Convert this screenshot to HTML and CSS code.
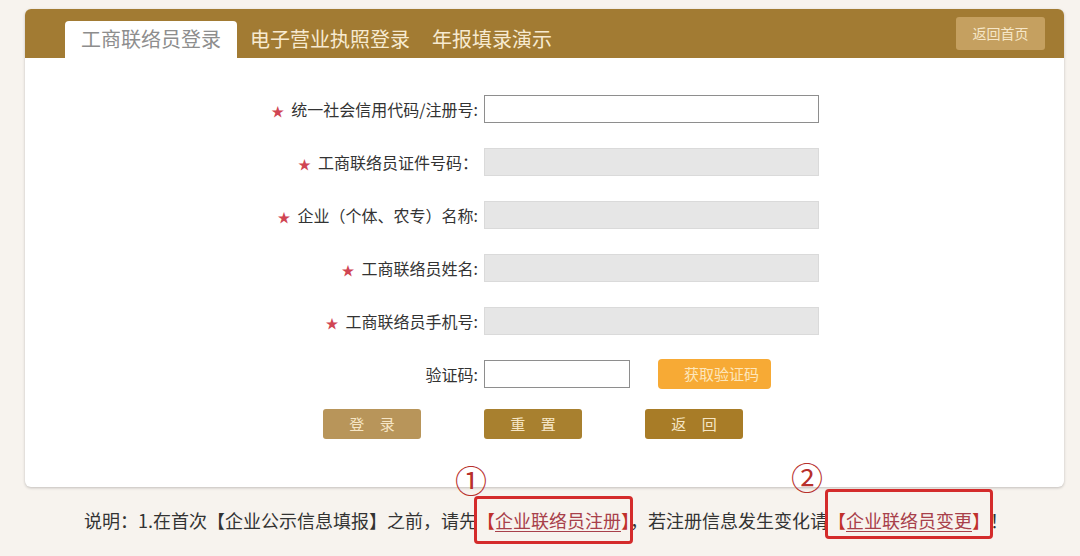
FILE: index.html
```html
<!DOCTYPE html>
<html lang="zh-CN">
<head>
<meta charset="utf-8">
<title>工商联络员登录</title>
<link rel="stylesheet" href="styles.css">
</head>
<body>
<div class="page">
  <div class="card">
    <div class="header">
      <div class="tab active">工商联络员登录</div>
      <div class="tab first-inactive">电子营业执照登录</div>
      <div class="tab">年报填录演示</div>
      <div class="home-btn">返回首页</div>
    </div>
    <div class="form">
      <div class="row">
        <div class="label"><span class="star">★</span>统一社会信用代码/注册号:</div>
        <div class="input white"></div>
      </div>
      <div class="row">
        <div class="label"><span class="star">★</span>工商联络员证件号码：</div>
        <div class="input grey"></div>
      </div>
      <div class="row">
        <div class="label"><span class="star">★</span>企业（个体、农专）名称:</div>
        <div class="input grey"></div>
      </div>
      <div class="row">
        <div class="label"><span class="star">★</span>工商联络员姓名:</div>
        <div class="input grey"></div>
      </div>
      <div class="row">
        <div class="label"><span class="star">★</span>工商联络员手机号:</div>
        <div class="input grey"></div>
      </div>
      <div class="row">
        <div class="label">验证码:</div>
        <div class="input white short"></div>
        <div class="code-btn">获取验证码</div>
      </div>
    </div>
    <div class="actions">
      <div class="btn login">登 录</div>
      <div class="btn reset">重 置</div>
      <div class="btn back">返 回</div>
    </div>
  </div>
  <div class="note">说明：1.在首次【企业公示信息填报】之前，请先<span class="mark mark1"><span class="num">①</span><span class="link">【<u>企业联络员注册</u>】</span></span>，若注册信息发生变化请<span class="mark mark2"><span class="num">②</span><span class="link">【<u>企业联络员变更</u>】</span></span>！</div>
</div>
</body>
</html>
```

FILE: styles.css
```css
html, body {
  margin: 0;
  padding: 0;
  background: #f7f3ee;
  font-family: "Noto Sans CJK SC", "Noto Sans", sans-serif;
}

.page {
  width: 1080px;
  height: 556px;
  box-sizing: border-box;
  padding: 9px 16px 0 25px;
}

.card {
  width: 1039px;
  height: 478px;
  box-sizing: border-box;
  background: #fff;
  border-radius: 6px;
  box-shadow: 0 1px 3px rgba(0, 0, 0, 0.22);
  overflow: hidden;
}

.header {
  height: 49px;
  background: #a27b33;
  display: flex;
  align-items: flex-end;
  padding-left: 40px;
  box-sizing: border-box;
}

.tab {
  height: 37px;
  line-height: 35px;
  padding: 0 11px;
  font-size: 20px;
  color: #f7ead0;
}

.tab.active {
  background: #fff;
  color: #8d8d8d;
  padding: 0 16px;
  border-radius: 4px 4px 0 0;
}

.tab.first-inactive {
  margin-left: 2px;
}

.home-btn {
  align-self: flex-start;
  margin: 8px 19px 0 auto;
  width: 89px;
  height: 33px;
  line-height: 32px;
  text-align: center;
  font-size: 14px;
  color: #f6e7c8;
  background: #c5a060;
  border-radius: 3px;
}

.form {
  padding: 37px 0 0 233px;
  display: flex;
  flex-direction: column;
  gap: 25px;
}

.row {
  display: flex;
  align-items: center;
  height: 28px;
}

.label {
  width: 220px;
  text-align: right;
  font-size: 16px;
  color: #333;
  padding-right: 6px;
  box-sizing: content-box;
  white-space: nowrap;
}

.star {
  color: #d04553;
  font-size: 13px;
  margin-right: 7px;
}

.input {
  width: 335px;
  height: 28px;
  box-sizing: border-box;
}

.input.white {
  background: #fff;
  border: 1px solid #8e8e8e;
}

.input.grey {
  background: #e6e6e6;
  border: 1px solid #dadada;
}

.input.short {
  width: 146px;
}

.code-btn {
  margin-left: 28px;
  width: 113px;
  height: 30px;
  box-sizing: border-box;
  padding-left: 26px;
  line-height: 30px;
  font-size: 15px;
  color: #fde6bb;
  background: #f7aa35;
  border-radius: 4px;
}

.actions {
  display: flex;
  gap: 63px;
  padding: 21px 0 0 298px;
}

.btn {
  width: 98px;
  height: 30px;
  line-height: 30px;
  text-align: center;
  font-size: 15px;
  color: #f6e6c6;
  border-radius: 3px;
  letter-spacing: 6px;
  text-indent: 6px;
}

.btn.login { background: #b8955a; }
.btn.reset { background: #a8802f; }
.btn.back { background: #a87c27; }

.note {
  margin-top: 21px;
  padding-left: 59px;
  font-size: 18px;
  line-height: 24px;
  color: #333;
  white-space: nowrap;
}

.mark {
  position: relative;
}

.link {
  color: #c0302c;
}

.link u {
  color: #a8404a;
  text-decoration-thickness: 1px;
  text-underline-offset: 3px;
}

.mark::after {
  content: "";
  position: absolute;
  left: -3px;
  right: -3px;
  top: -11px;
  bottom: -11px;
  border: 3px solid #d42b2b;
  border-radius: 4px;
}

.mark2::after {
  top: -18px;
  bottom: -6px;
}

.num {
  position: absolute;
  left: -22px;
  top: -44px;
  font-size: 32px;
  line-height: 32px;
  color: #b8302c;
}

.mark2 .num {
  top: -47px;
  left: -37px;
}
```
